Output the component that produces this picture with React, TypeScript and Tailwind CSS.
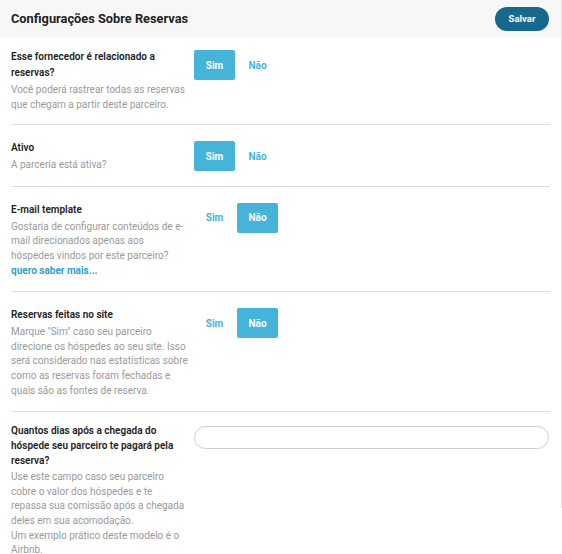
import React, { useState } from "react";

type Row = {
  title: string[];
  desc: string[];
  link?: string;
  value?: boolean;
  input?: boolean;
};

// line breaks follow the reference wrapping
const rows: Row[] = [
  {
    title: ["Esse fornecedor é relacionado a", "reservas?"],
    desc: ["Você poderá rastrear todas as reservas", "que chegam a partir deste parceiro."],
    value: true,
  },
  { title: ["Ativo"], desc: ["A parceria está ativa?"], value: true },
  {
    title: ["E-mail template"],
    desc: ["Gostaria de configurar conteúdos de e-", "mail direcionados apenas aos", "hóspedes vindos por este parceiro?"],
    link: "quero saber mais...",
    value: false,
  },
  {
    title: ["Reservas feitas no site"],
    desc: [
      'Marque "Sim" caso seu parceiro',
      "direcione os hóspedes ao seu site. Isso",
      "será considerado nas estatísticas sobre",
      "como as reservas foram fechadas e",
      "quais são as fontes de reserva.",
    ],
    value: false,
  },
  {
    title: ["Quantos dias após a chegada do", "hóspede seu parceiro te pagará pela", "reserva?"],
    desc: [
      "Use este campo caso seu parceiro",
      "cobre o valor dos hóspedes e te",
      "repassa sua comissão após a chegada",
      "deles em sua acomodação.",
      "Um exemplo prático deste modelo é o",
      "Airbnb.",
    ],
    input: true,
  },
];

function Toggle({ initial }: { initial: boolean }) {
  const [on, setOn] = useState(initial);
  const base = "flex h-[30px] w-[41px] items-center justify-center rounded-[2px] text-[10px] font-bold";
  return (
    <div className="flex gap-[2px]">
      <button className={on ? `${base} bg-[#45b4d8] text-white` : `${base} text-[#45b4d8]`} onClick={() => setOn(true)} type="button">
        Sim
      </button>
      <button className={!on ? `${base} bg-[#45b4d8] text-white` : `${base} text-[#45b4d8]`} onClick={() => setOn(false)} type="button">
        Não
      </button>
    </div>
  );
}

export default function App() {
  return (
    <div className="flex w-[562px] bg-white font-['Roboto',sans-serif]">
      <div className="w-[561px]">
        <header className="flex h-[38px] items-center justify-between bg-[#f7f7f7] pl-[11px] pr-[12px]">
          <h1 className="text-[12.8px] font-bold text-[#222]">Configurações Sobre Reservas</h1>
          <button className="h-[24px] w-[54px] rounded-full bg-[#16688c] text-[9.5px] font-bold text-white" type="button">
            Salvar
          </button>
        </header>

        <div className="px-[11px] pt-[1px]">
          {rows.map((row, i) => (
            <div
              className={
                i === 0
                  ? "flex border-b border-[#dcdcdc] pb-[12px] pt-[10px]"
                  : i < rows.length - 1
                    ? "flex border-b border-[#dcdcdc] pb-[13px] pt-[15px]"
                    : "flex pt-[11px]"
              }
              key={row.title[0]}
            >
              <div className="w-[183px] whitespace-nowrap">
                <p className={row.input ? "text-[10px] font-semibold leading-[15px] text-[#222]" : "text-[10px] font-semibold leading-[16px] text-[#222]"}>
                  {row.title.map((t) => (
                    <span className="block" key={t}>{t}</span>
                  ))}
                </p>
                <div className="mt-[2px] text-[10px] leading-[14.6px] text-[#9a9a9a]">
                  {row.desc.map((d) => (
                    <p key={d}>{d}</p>
                  ))}
                  {row.link ? <a className="font-bold text-[#2e9fcc]" href="#">{row.link}</a> : null}
                </div>
              </div>
              <div className="flex-1 pt-[1px]">
                {row.input ? (
                  <input className="h-[23px] w-[355px] rounded-full border border-[#cfcfcf] px-3 text-[11px] outline-none" type="text" />
                ) : (
                  <Toggle initial={Boolean(row.value)} />
                )}
              </div>
            </div>
          ))}
        </div>
      </div>
      <div className="h-[508px] w-px bg-[#e3e3e3]" />
    </div>
  );
}
